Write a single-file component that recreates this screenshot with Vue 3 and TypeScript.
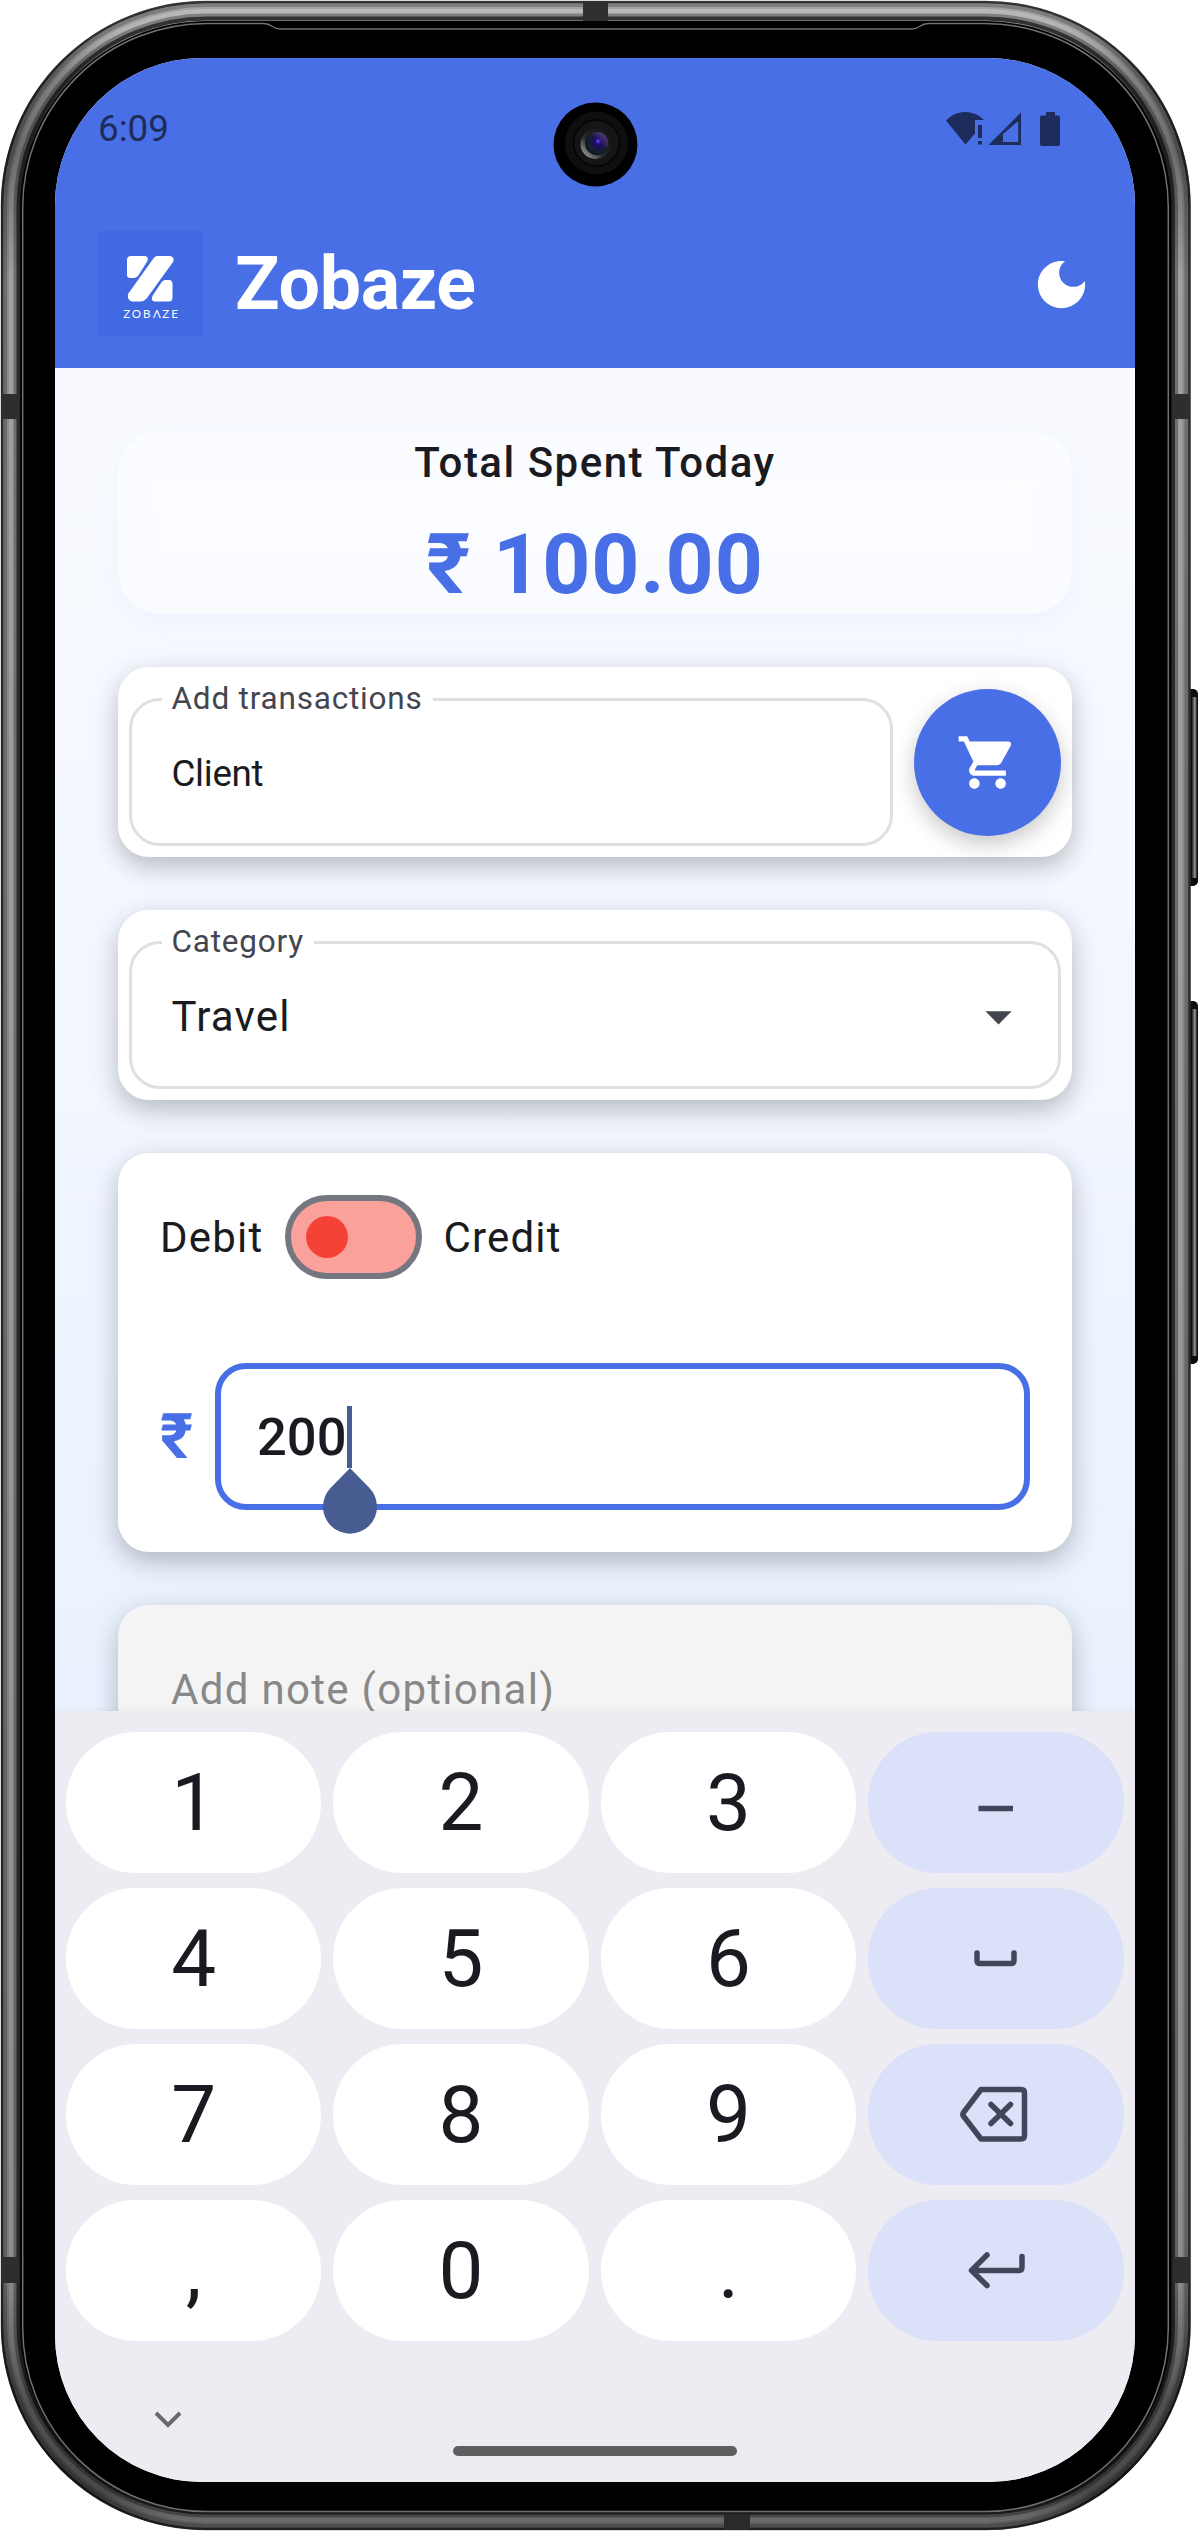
<script setup lang="ts">
interface Key {
  id: string
  label?: string
  icon?: 'minus' | 'space' | 'backspace' | 'enter'
}

const keys: Key[] = [
  { id: '1', label: '1' }, { id: '2', label: '2' }, { id: '3', label: '3' }, { id: 'minus', icon: 'minus' },
  { id: '4', label: '4' }, { id: '5', label: '5' }, { id: '6', label: '6' }, { id: 'space', icon: 'space' },
  { id: '7', label: '7' }, { id: '8', label: '8' }, { id: '9', label: '9' }, { id: 'backspace', icon: 'backspace' },
  { id: 'comma', label: ',' }, { id: '0', label: '0' }, { id: 'dot', label: '.' }, { id: 'enter', icon: 'enter' },
]
</script>

<template>
  <div class="stage">
    <svg class="device" width="1198" height="2531" viewBox="0 0 1198 2531" aria-hidden="true">
      <defs>
        <linearGradient id="body" x1="0" y1="0" x2="0" y2="1">
          <stop offset="0" stop-color="#bcbcbc" />
          <stop offset="0.012" stop-color="#b0b0b0" />
          <stop offset="0.03" stop-color="#808080" />
          <stop offset="0.06" stop-color="#6c6c6c" />
          <stop offset="0.11" stop-color="#a0a0a0" />
          <stop offset="0.5" stop-color="#999" />
          <stop offset="0.9" stop-color="#8c8c8c" />
          <stop offset="0.95" stop-color="#505050" />
          <stop offset="0.985" stop-color="#484848" />
          <stop offset="1" stop-color="#777" />
        </linearGradient>
        <linearGradient id="button" x1="0" y1="0" x2="1" y2="0">
          <stop offset="0" stop-color="#222" />
          <stop offset="0.6" stop-color="#999" />
          <stop offset="1" stop-color="#111" />
        </linearGradient>
      </defs>
      <rect x="1186" y="689" width="12" height="197" rx="5" fill="#0c0c0c" />
      <rect x="1192" y="697" width="5" height="181" fill="url(#button)" />
      <rect x="1186" y="1001" width="12" height="363" rx="5" fill="#0c0c0c" />
      <rect x="1192" y="1009" width="5" height="347" fill="url(#button)" />
      <rect x="1" y="1" width="1189.500" height="2529" rx="205" fill="url(#body)" />
      <g fill="none" stroke="#000">
        <rect x="2" y="2" width="1187.500" height="2527" rx="204" stroke-width="2.500" stroke-opacity="0.6" />
        <rect x="4" y="4" width="1183.500" height="2523" rx="202" stroke-width="6" stroke-opacity="0.22" />
        <rect x="5" y="5" width="1181.500" height="2521" rx="201" stroke-width="8" stroke-opacity="0.12" />
        <rect x="17" y="17" width="1157.500" height="2497" rx="189" stroke-width="7" stroke-opacity="0.3" />
        <rect x="18.500" y="18.500" width="1154.500" height="2494" rx="188" stroke-width="4" stroke-opacity="0.6" />
      </g>
      <rect x="583" y="1" width="25" height="20" fill="#303030" />
      <rect x="724" y="2514" width="26" height="16" fill="#2a2a2a" />
      <rect x="1" y="394" width="17" height="25" fill="#2e2e2e" />
      <rect x="1" y="2257" width="17" height="26" fill="#2e2e2e" />
      <rect x="1173" y="394" width="17" height="25" fill="#2e2e2e" />
      <rect x="1173" y="2257" width="17" height="26" fill="#2e2e2e" />
      <rect x="20" y="21" width="1151.500" height="2491" rx="187" fill="#000" />
      <path d="M912 29H280C272 29 272 23.500 264 23.500H207A184 184 0 0 0 22.700 207V2328A184 184 0 0 0 207 2511.500H983A184 184 0 0 0 1168.300 2328V207A184 184 0 0 0 984 23.500H928C920 23.500 920 29 912 29Z" fill="none" stroke="#707070" stroke-width="1.500" />
    </svg>

    <main class="screen">
      <header class="app-header">
        <div class="status-bar">
          <span class="clock">6:09</span>
          <svg class="status-icons" width="116" height="40" viewBox="0 0 116 40" fill="#1d2c5a">
            <path d="M0 9.500C11-1.700 27-1.700 38 9H29V22.500L19.500 33.500Z" />
            <path d="M32 14h4v13h-4zM32 30h4v3.500h-4z" />
            <path d="M42.500 34L75 1.500V34ZM57 31H72.200V10L57 23Z" fill-rule="evenodd" />
            <path d="M94 6.500a2 2 0 0 1 2-2h4V1h9v3.500h3a2 2 0 0 1 2 2V33a2 2 0 0 1-2 2H96a2 2 0 0 1-2-2Z" />
          </svg>
        </div>
        <div class="toolbar">
          <div class="logo">
            <svg width="47" height="46" viewBox="0 0 47 46" fill="#fff">
              <path d="M4 0H17Q22 0 20.500 5L11 20Q9 22 7 22H3Q0 22 0 19V4Q0 0 4 0Z" />
              <path d="M30 0H43Q48 1 46 6L20 42Q17 45.500 14 45.500H5Q0 44 1 38L26 3Q28 0 30 0Z" />
              <path d="M38 24H42Q45.500 24 45.500 28V41Q45.500 45.500 42 45.500H27Q23 44 26 39L34 27Q36 24 38 24Z" />
            </svg>
            <span class="logo-word">ZOB<span class="flip">V</span>ZE</span>
          </div>
          <h1>Zobaze</h1>
          <svg class="moon" width="63" height="63" viewBox="0 0 24 24" fill="#fff">
            <path d="M12 3c-4.970 0-9 4.030-9 9s4.030 9 9 9 9-4.030 9-9c0-.46-.04-.92-.1-1.360-.98 1.370-2.580 2.260-4.400 2.260-2.980 0-5.400-2.420-5.400-5.400 0-1.810.89-3.420 2.260-4.400-.44-.06-.9-.1-1.360-.1z" />
          </svg>
        </div>
        <svg class="camera" width="85" height="85" viewBox="0 0 85 85">
          <defs>
            <radialGradient id="lens" cx="0.55" cy="0.45" r="0.6">
              <stop offset="0" stop-color="#3a1fb0" />
              <stop offset="0.3" stop-color="#1c0c58" />
              <stop offset="0.7" stop-color="#14222f" />
              <stop offset="1" stop-color="#0c0c12" />
            </radialGradient>
            <linearGradient id="rim" x1="0.15" y1="0.85" x2="0.75" y2="0.25">
              <stop offset="0" stop-color="#8a8a8a" />
              <stop offset="0.45" stop-color="#2a2a2a" />
              <stop offset="1" stop-color="#1a1a1a" />
            </linearGradient>
            <linearGradient id="glint" x1="0" y1="1" x2="1" y2="0">
              <stop offset="0.55" stop-color="#8d4fa8" stop-opacity="0" />
              <stop offset="1" stop-color="#8d4fa8" stop-opacity="0.8" />
            </linearGradient>
          </defs>
          <circle cx="42.500" cy="42.500" r="42" fill="#000" />
          <circle cx="43.500" cy="41" r="31.500" fill="#0f0f0f" />
          <circle cx="43.500" cy="41" r="23" fill="#151515" stroke="#030303" stroke-width="1.500" />
          <circle cx="42.500" cy="42" r="15" fill="url(#rim)" />
          <circle cx="44" cy="41" r="12" fill="url(#lens)" />
          <circle cx="44" cy="41" r="11" fill="url(#glint)" />
          <circle cx="45" cy="39" r="1.500" fill="#5a42f0" />
        </svg>
      </header>

      <section class="content">
        <div class="total-card">
          <div class="total-label">Total Spent Today</div>
          <div class="total-value">₹ 100.00</div>
        </div>

        <div class="card field-card">
          <fieldset class="outlined">
            <legend>Add transactions</legend>
            <span class="client">Client</span>
          </fieldset>
          <button class="fab" aria-label="Cart">
            <svg width="63" height="63" viewBox="0 0 24 24" fill="#fff">
              <path d="M7 18c-1.100 0-1.990.9-1.990 2S5.900 22 7 22s2-.9 2-2-.9-2-2-2zM1 2v2h2l3.600 7.590-1.350 2.450c-.16.28-.25.61-.25.96 0 1.100.9 2 2 2h12v-2H7.420c-.14 0-.25-.11-.25-.25l.03-.12.9-1.630h7.450c.75 0 1.410-.41 1.750-1.030l3.580-6.490c.08-.14.12-.31.12-.48 0-.55-.45-1-1-1H5.210l-.94-2H1zm16 16c-1.100 0-1.990.9-1.990 2s.89 2 1.990 2 2-.9 2-2-.9-2-2-2z" />
            </svg>
          </button>
        </div>

        <div class="card field-card">
          <fieldset class="outlined">
            <legend>Category</legend>
            <span class="travel">Travel</span>
            <svg class="caret" width="63" height="63" viewBox="0 0 24 24" fill="#44464f"><path d="M7 10l5 5 5-5z" /></svg>
          </fieldset>
        </div>

        <div class="card amount-card">
          <div class="switch-row">
            <span>Debit</span>
            <span class="switch"><span class="thumb" /></span>
            <span>Credit</span>
          </div>
          <div class="amount-row">
            <span class="rupee">₹</span>
            <div class="amount-input">
              <span class="amount">200</span>
              <span class="cursor">
                <svg class="handle" width="54" height="66" viewBox="0 0 54 66" fill="#475d92">
                  <path d="M27 0L46 19.500A27 27 0 1 1 8 19.500Z" />
                </svg>
              </span>
            </div>
          </div>
        </div>

        <div class="card note-card">Add note (optional)</div>
      </section>

      <section class="keyboard">
        <div class="keys">
          <div v-for="key in keys" :key="key.id" class="key" :class="{ action: key.icon }">
            <span v-if="key.label">{{ key.label }}</span>
            <svg v-else width="84" height="84" viewBox="0 0 84 84" fill="none" stroke="#41465a" stroke-width="5.500" stroke-linecap="round" stroke-linejoin="round">
              <path v-if="key.icon === 'minus'" d="M24.500 47.500H59" stroke-linecap="butt" />
              <path v-else-if="key.icon === 'space'" d="M23 36V43.500Q23 46.500 26 46.500H57Q60 46.500 60 43.500V36" />
              <template v-else-if="key.icon === 'backspace'">
                <path d="M27 16.500H67Q70.500 16.500 70.500 20V62.500Q70.500 66 67 66H27L9 42.500Q8.500 41 9.500 39.500Z" />
                <path d="M37 31.500L56.500 50.500M56.500 31.500L37 50.500" />
              </template>
              <path v-else d="M33 26L17.500 41.500L33 56.500M18.500 41.500H65Q68 41.500 68 38V27.500" />
            </svg>
          </div>
        </div>
        <div class="nav">
          <svg class="chevron" width="28" height="18" viewBox="0 0 28 18" fill="none" stroke="#6a6a6c" stroke-width="4"><path d="M2 2L14 14L26 2" /></svg>
          <span class="home" />
        </div>
      </section>
    </main>
  </div>
</template>

<style>
body {
  margin: 0;
  background: #fff;
}
</style>

<style scoped>
* {
  box-sizing: border-box;
}

.stage {
  position: relative;
  width: 1198px;
  height: 2531px;
  padding: 58px 63px 49px 55px;
  overflow: hidden;
  background: #fff;
  font-family: Roboto, "Noto Sans", sans-serif;
  color: #1a1b20;
}

.device {
  position: absolute;
  left: 0;
  top: 0;
}

.screen {
  position: relative;
  display: flex;
  flex-direction: column;
  width: 1080px;
  height: 2424px;
  overflow: hidden;
  border-radius: 147px;
  background: #fafbff;
}

.app-header {
  position: relative;
  flex: none;
  height: 310px;
  background: #486fe6;
}

.status-bar {
  display: flex;
  align-items: center;
  justify-content: space-between;
  height: 142px;
  padding: 0 73px 0 43px;
  color: #1d2c5a;
}

.clock {
  font-size: 36.75px;
  line-height: 42px;
}

.status-icons {
  margin-top: 3px;
}

.toolbar {
  display: flex;
  align-items: center;
  height: 168px;
  padding: 0 42px 0 43px;
}

.logo {
  display: flex;
  flex-direction: column;
  align-items: center;
  width: 105px;
  height: 105px;
  padding-top: 25px;
  margin-top: -1px;
  background: #4169e1;
}

.logo-word {
  margin-top: 5px;
  margin-right: -2px;
  color: #fff;
  font-family: Lato, sans-serif;
  font-size: 11.500px;
  font-weight: 400;
  line-height: 14px;
  letter-spacing: 2px;
}

.flip {
  display: inline-block;
  transform: rotate(180deg) translateX(2px);
}

h1 {
  flex: 1;
  margin: 0 0 0 32px;
  color: #fff;
  font-size: 73.5px;
  font-weight: 700;
  line-height: 84px;
  letter-spacing: -0.3px;
}

.camera {
  position: absolute;
  left: 497.500px;
  top: 44px;
}

.content {
  display: flex;
  flex-direction: column;
  gap: 53px;
  flex: none;
  height: 1343px;
  padding: 63px 63px 0;
  overflow: hidden;
  background: linear-gradient(#f8faff 0%, #f8faff 10%, #f1f6ff 55%, #eaf2ff 100%);
}

.total-card {
  flex: none;
  height: 183px;
  border-radius: 42px;
  padding-top: 8px;
  text-align: center;
  background:
    linear-gradient(#fcfdff, #fbfcff) 37px 47px / 881px 100px no-repeat,
    linear-gradient(#fbfcff, #f9fbff);
  box-shadow: 0 8px 24px rgba(72, 111, 230, 0.05);
}

.total-label {
  font-size: 42px;
  font-weight: 500;
  line-height: 48px;
  letter-spacing: 1.5px;
}

.total-value {
  margin-top: 29px;
  color: #486fe6;
  font-size: 84px;
  font-weight: 700;
  line-height: 98px;
  letter-spacing: 0.9px;
}

.card {
  flex: none;
  border-radius: 31px;
  background: #fff;
  box-shadow: 0 10px 25px rgba(0, 0, 0, 0.21), 0 2px 44px rgba(0, 0, 0, 0.05);
}

.field-card {
  display: flex;
  align-items: flex-end;
  gap: 21px;
  height: 190px;
  padding: 0 11px 11px 10.500px;
}

.outlined {
  position: relative;
  display: flex;
  flex: 1;
  min-width: 0;
  align-items: center;
  height: 165px;
  margin: 0;
  padding: 0 28px 14px 40px;
  border: 3px solid #e0e0e0;
  border-radius: 31px;
}

.outlined legend {
  height: 37px;
  margin-left: -10px;
  padding: 0 10px;
  color: #44464f;
  font-size: 31.5px;
  line-height: 36px;
  letter-spacing: 0.8px;
}

.client {
  font-size: 36.75px;
  letter-spacing: -0.3px;
}

.travel {
  flex: 1;
  font-size: 42px;
  letter-spacing: 1.2px;
}

.fab {
  display: flex;
  flex: none;
  align-items: center;
  justify-content: center;
  width: 147px;
  height: 147px;
  margin-bottom: 10px;
  padding: 0;
  border: 0;
  border-radius: 50%;
  background: #486fe6;
  box-shadow: 0 8px 22px rgba(0, 0, 0, 0.22);
}

.amount-card {
  height: 399px;
  padding: 42px;
}

.switch-row {
  display: flex;
  align-items: center;
  height: 84px;
  font-size: 42px;
  letter-spacing: 1.2px;
}

.switch {
  display: flex;
  align-items: center;
  width: 137px;
  height: 84px;
  margin: 0 21px 0 22px;
  padding-left: 15px;
  border: 6px solid #757780;
  border-radius: 42px;
  background: #faa19b;
}

.thumb {
  width: 42px;
  height: 42px;
  border-radius: 50%;
  background: #f44336;
}

.amount-row {
  display: flex;
  align-items: center;
  height: 147px;
  margin-top: 84px;
}

.rupee {
  width: 55px;
  color: #486fe6;
  font-size: 63px;
  font-weight: 700;
}

.amount-input {
  display: flex;
  flex: 1;
  align-items: center;
  height: 147px;
  padding-left: 36px;
  border: 6px solid #486fe6;
  border-radius: 31px;
}

.amount {
  font-size: 52.5px;
  font-weight: 500;
}

.cursor {
  position: relative;
  width: 5px;
  height: 62px;
  background: #475d92;
}

.handle {
  position: absolute;
  left: -24px;
  top: 62px;
}

.note-card {
  height: 200px;
  padding: 60px 53px;
  background: #f4f4f4;
  color: #888;
  font-size: 42px;
  line-height: 50px;
  letter-spacing: 1.3px;
}

.keyboard {
  display: flex;
  flex: 1;
  flex-direction: column;
  padding: 21px 11.500px 0 11px;
  background: #edecf3;
  box-shadow: 0 -2px 5px rgba(0, 0, 0, 0.03);
  z-index: 1;
}

.keys {
  display: grid;
  grid-template-columns: repeat(4, 1fr);
  grid-auto-rows: 141px;
  gap: 15px 12px;
}

.key {
  display: flex;
  align-items: center;
  justify-content: center;
  border-radius: 70px;
  background: #fff;
  color: #1a1b20;
  font-family: Roboto, sans-serif;
  font-size: 80px;
  line-height: 100px;
}

.action {
  background: #dce1fa;
}

.nav {
  position: relative;
  display: flex;
  flex: 1;
  align-items: flex-start;
  padding: 70px 0 0 88px;
}

.home {
  position: absolute;
  left: 387px;
  top: 105px;
  width: 284px;
  height: 10px;
  border-radius: 5px;
  background: #5f5f61;
}
</style>
